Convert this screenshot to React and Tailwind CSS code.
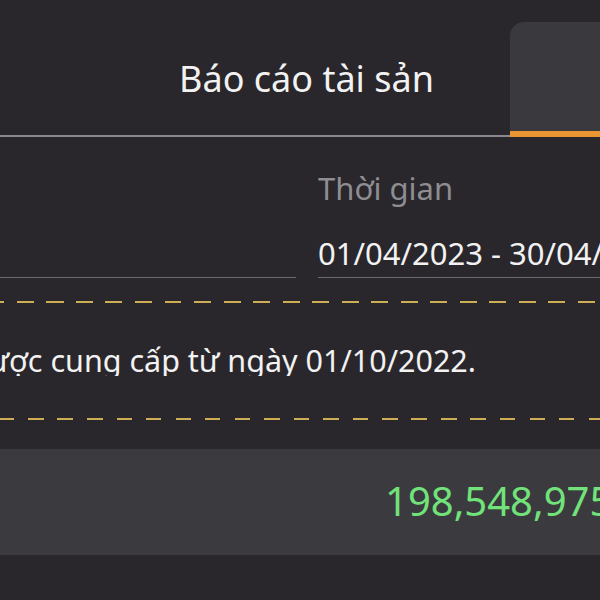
export default function App() {
  return (
    <div className="h-[600px] w-[600px] overflow-hidden bg-[#29272c] font-['Noto_Sans',sans-serif] text-[#f2f2f2]">
      {/* tabs */}
      <div className="flex h-[137px]">
        <div className="flex w-[510px] justify-center border-b-2 border-[#8a898e] pl-[103px] pt-[61px]">
          <span className="whitespace-nowrap text-[36px] leading-[36px]">Báo cáo tài sản</span>
        </div>
        <div className="mt-[22px] flex-1 rounded-tl-[14px] border-b-[6px] border-[#eb9532] bg-[#3a393e]" />
      </div>

      {/* filters */}
      <div className="flex gap-[22px] pt-[36px]">
        <div className="w-[296px] border-b border-[#6b6a6f]" />
        <div className="flex-1 overflow-hidden border-b border-[#6b6a6f] pb-[8px]">
          <div className="text-[31px] leading-[31px] text-[#8e8d92]">Thời gian</div>
          <div className="mt-[34px] whitespace-nowrap text-[31px] leading-[31px]">01/04/2023 - 30/04/2023</div>
        </div>
      </div>

      <div className="mt-[23px] h-[2px] bg-[repeating-linear-gradient(90deg,#cdae55_0_4.5px,transparent_4.5px_17px,#cdae55_17px_29.5px)]" />

      <div className="mt-[42px] flex w-[476px] justify-end overflow-hidden whitespace-nowrap">
        <span className="text-[30.5px] leading-[31px]">Dữ liệu được cung cấp từ ngày 01/10/2022.</span>
      </div>

      <div className="mt-[42px] h-[2px] bg-[repeating-linear-gradient(90deg,#cdae55_0_14px,transparent_14px_28px,#cdae55_28px_29.5px)]" />

      {/* total */}
      <div className="mt-[29px] h-[106px] overflow-hidden whitespace-nowrap bg-[#3b3a3f] pl-[385px] pt-[32px]">
        <span className="text-[40px] leading-[40px] text-[#72e27a]">198,548,975,000</span>
      </div>
    </div>
  );
}
